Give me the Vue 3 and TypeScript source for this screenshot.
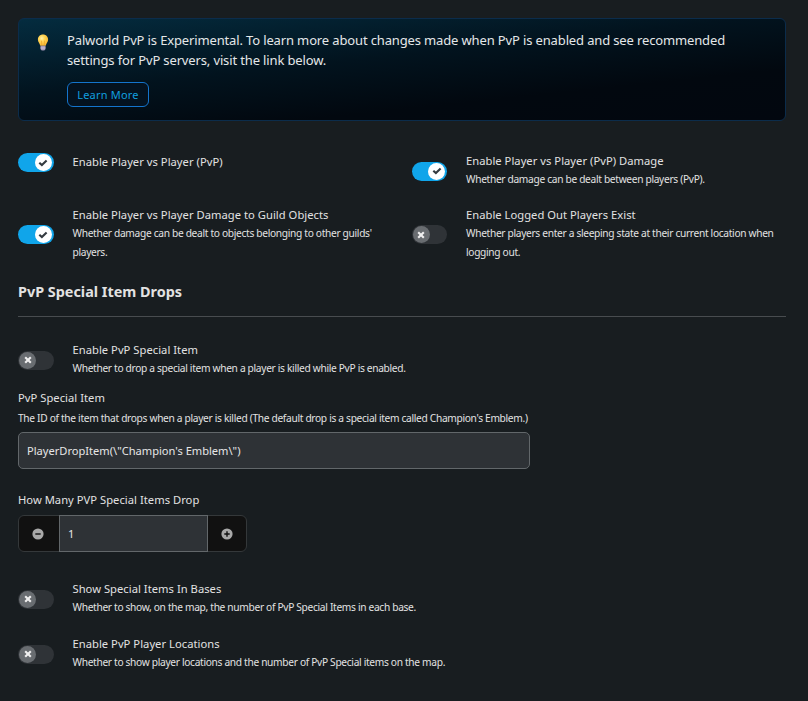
<script setup lang="ts">
import { defineComponent, h, ref } from 'vue'

interface Setting {
  title: string
  desc?: string
  on: boolean
}

const combat = ref<Setting[]>([
  { title: 'Enable Player vs Player (PvP)', on: true },
  {
    title: 'Enable Player vs Player (PvP) Damage',
    desc: 'Whether damage can be dealt between players (PvP).',
    on: true,
  },
  {
    title: 'Enable Player vs Player Damage to Guild Objects',
    desc: "Whether damage can be dealt to objects belonging to other guilds' players.",
    on: true,
  },
  {
    title: 'Enable Logged Out Players Exist',
    desc: 'Whether players enter a sleeping state at their current location when logging out.',
    on: false,
  },
])

const dropToggle = ref<Setting[]>([
  {
    title: 'Enable PvP Special Item',
    desc: 'Whether to drop a special item when a player is killed while PvP is enabled.',
    on: false,
  },
])

const mapToggles = ref<Setting[]>([
  {
    title: 'Show Special Items In Bases',
    desc: 'Whether to show, on the map, the number of PvP Special Items in each base.',
    on: false,
  },
  {
    title: 'Enable PvP Player Locations',
    desc: 'Whether to show player locations and the number of PvP Special items on the map.',
    on: false,
  },
])

const specialItem = ref('PlayerDropItem(\\"Champion\'s Emblem\\")')
const dropCount = ref(1)

const SettingRow = defineComponent({
  props: { item: { type: Object as () => Setting, required: true } },
  setup(props) {
    return () =>
      h('div', { class: 'setting' }, [
        h(
          'button',
          {
            class: ['switch', { on: props.item.on }],
            role: 'switch',
            'aria-checked': props.item.on,
            onClick: () => (props.item.on = !props.item.on),
          },
          [
            h('span', { class: 'knob' }, [
              h('svg', { viewBox: '0 0 10 10', width: 10, height: 10 }, [
                h('path', {
                  d: props.item.on ? 'M1.300 4.700 3.900 7.100 8.600 2.500' : 'M2.200 2.200 7.800 7.800M7.800 2.200 2.200 7.800',
                  fill: 'none',
                  stroke: 'currentColor',
                  'stroke-width': 2.1,
                }),
              ]),
            ]),
          ],
        ),
        h('div', { class: 'text' }, [
          h('div', { class: 'title' }, props.item.title),
          props.item.desc ? h('div', { class: 'desc' }, props.item.desc) : null,
        ]),
      ])
  },
})
</script>

<template>
  <main class="page">
    <section class="notice">
      <svg class="bulb" viewBox="0 0 12 17" width="12" height="17">
        <defs>
          <radialGradient id="glow" cx="0.38" cy="0.35" r="0.7">
            <stop offset="0" stop-color="#fff3b0" />
            <stop offset="0.35" stop-color="#ffd75a" />
            <stop offset="1" stop-color="#f6b52c" />
          </radialGradient>
        </defs>
        <path d="M6 .4C2.900.4.900 2.600.900 5.400c0 2.600 1.700 3.500 2.400 6.400h5.400c.7-2.900 2.400-3.800 2.400-6.400C11.100 2.600 9.100.4 6 .4Z" fill="url(#glow)" />
        <path d="M4.900 11.500 4.400 6.600M7.100 11.500 7.600 6.600" stroke="#e79a22" stroke-width=".6" />
        <path d="M3.500 11.800h5v3.200L7.300 16.500H4.700L3.500 15Z" fill="#9a8fb0" />
        <path d="M3.500 13.200h5M3.700 14.800h4.600" stroke="#d9d3e6" stroke-width=".7" />
      </svg>
      <div>
        <p class="message">
          Palworld PvP is Experimental. To learn more about changes made when PvP is enabled and see recommended
          settings for PvP servers, visit the link below.
        </p>
        <button class="learn">Learn More</button>
      </div>
    </section>

    <section class="grid">
      <SettingRow v-for="s in combat" :key="s.title" :item="s" />
    </section>

    <h2 class="heading">PvP Special Item Drops</h2>

    <SettingRow v-for="s in dropToggle" :key="s.title" :item="s" />

    <label class="title field-title" for="item">PvP Special Item</label>
    <div class="desc field-desc">
      The ID of the item that drops when a player is killed (The default drop is a special item called Champion's
      Emblem.)
    </div>
    <input id="item" v-model="specialItem" class="input" type="text" />

    <label class="title count-title" for="count">How Many PVP Special Items Drop</label>
    <div class="stepper">
      <button class="step" aria-label="Decrease" @click="dropCount--">
        <svg viewBox="0 0 12 12" width="12" height="12">
          <circle cx="6" cy="6" r="5.6" fill="#a9a9a9" />
          <path d="M3.300 6h5.400" stroke="#111" stroke-width="1.400" />
        </svg>
      </button>
      <input id="count" v-model="dropCount" class="count" type="text" />
      <button class="step" aria-label="Increase" @click="dropCount++">
        <svg viewBox="0 0 12 12" width="12" height="12">
          <circle cx="6" cy="6" r="5.6" fill="#a9a9a9" />
          <path d="M3.300 6h5.400M6 3.300v5.400" stroke="#111" stroke-width="1.400" />
        </svg>
      </button>
    </div>

    <section class="stack">
      <SettingRow v-for="s in mapToggles" :key="s.title" :item="s" />
    </section>
  </main>
</template>

<style>
body {
  background: #181d20;
}
</style>

<style scoped>
.page {
  box-sizing: border-box;
  min-height: 701px;
  padding: 18px 22px 0 18px;
  font-family: 'Noto Sans', sans-serif;
  color: #dcdcdc;
}
.page :deep(*) {
  box-sizing: border-box;
}
.page :deep(button) {
  padding: 0;
  font-family: inherit;
}
.notice {
  display: flex;
  gap: 18px;
  height: 103px;
  padding: 11px 18px;
  border: 1px solid #0b2c4b;
  border-radius: 6px;
  background: linear-gradient(174deg, #042c3f 0%, #02131e 42%, #02080f 72%, #02070f 100%);
}
.bulb {
  flex: none;
  margin-top: 4px;
}
.message {
  margin: 0 0 12px;
  font-size: 13px;
  line-height: 20px;
  letter-spacing: -0.14px;
  color: #e4e7e9;
}
.page .learn {
  display: block;
  width: 82px;
  height: 25px;
  border: 1px solid #1474cc;
  border-radius: 6px;
  background: #04121f;
  color: #119fdf;
  font-size: 11px;
  letter-spacing: 0.2px;
}
.grid {
  display: grid;
  grid-template-columns: 373.5px 374px;
  column-gap: 20px;
  row-gap: 16px;
  align-items: start;
  margin-top: 31px;
}
.page :deep(.setting) {
  display: flex;
  align-items: center;
  gap: 19px;
  min-height: 21px;
}
.page :deep(.text) {
  margin: -1px 0 1px;
}
.page :deep(.switch) {
  flex: none;
  display: flex;
  width: 35.5px;
  height: 19px;
  padding: 1px 2px 1px 1px;
  border: 0;
  border-radius: 10px;
  background: #2f3337;
}
.page :deep(.switch.on) {
  justify-content: flex-end;
  background: #10a5ea;
}
.page :deep(.knob) {
  display: flex;
  align-items: center;
  justify-content: center;
  width: 17px;
  height: 17px;
  border-radius: 50%;
  background: #696d71;
  color: #f0f0f0;
}
.page :deep(.on .knob) {
  background: #fff;
  color: #343a40;
}
.page :deep(.title) {
  font-size: 11.2px;
  line-height: 19px;
  letter-spacing: 0.03px;
  color: #e2e2e2;
}
.page :deep(.desc) {
  font-size: 10.2px;
  line-height: 19px;
  letter-spacing: -0.32px;
  color: #e2e2e2;
}
.heading {
  margin: 17px 0 24px;
  padding-bottom: 12px;
  border-bottom: 1px solid #484c4f;
  font-size: 14.4px;
  line-height: 24px;
  font-weight: 700;
  color: #e2e2e2;
}
.field-title {
  display: block;
  margin-top: 9px;
}
.field-desc {
  margin: 2px 0 4px;
}
.input {
  display: block;
  width: 512px;
  height: 37px;
  padding: 0 8px;
  border: 1px solid #62676a;
  border-radius: 5px;
  background: #2e3236;
  color: #e6e6e6;
  font: 11.1px 'Noto Sans', sans-serif;
}
.count-title {
  display: block;
  margin-top: 21px;
}
.stepper {
  display: flex;
  width: 229px;
  height: 37px;
  margin-top: 6px;
  border: 1px solid #34383a;
  border-radius: 6px;
  background: #111;
}
.step {
  display: flex;
  flex: 1;
  align-items: center;
  justify-content: center;
  border: 0;
  background: none;
}
.step:first-child {
  flex: 0 0 40px;
}
.page .step:first-child {
  padding-right: 2px;
}
.count {
  width: 149px;
  height: 37px;
  margin: -1px 0;
  padding: 0 8px;
  border: 1px solid #62676a;
  border-radius: 0;
  background: #2e3236;
  color: #e6e6e6;
  font: 11px 'Noto Sans', sans-serif;
}
.stack {
  display: grid;
  row-gap: 17px;
  margin-top: 28px;
}
</style>
